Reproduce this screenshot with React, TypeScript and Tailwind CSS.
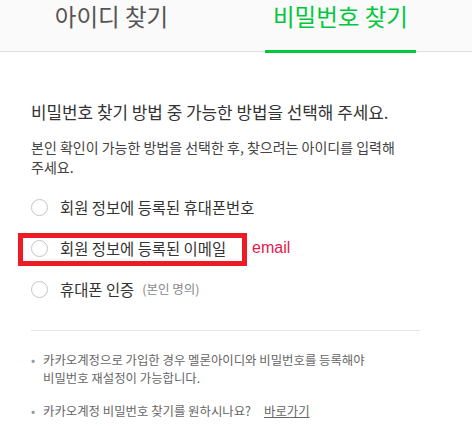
import React from "react";

const font = { fontFamily: '"Noto Sans CJK KR", "Noto Sans", sans-serif' };

function Radio({ label, note }: { label: string; note?: string }) {
  return (
    <div className="flex items-center h-[20px]">
      <span className="w-[17px] h-[17px] rounded-full border border-[#c4c4c4] bg-white shrink-0" />
      <span className="ml-[12px] text-[15.4px] leading-[20px] text-[#333] whitespace-nowrap">{label}</span>
      {note && <span className="ml-[8px] text-[12.5px] leading-[20px] text-[#888] whitespace-nowrap">{note}</span>}
    </div>
  );
}

export default function App() {
  return (
    <div className="w-[472px] h-[428px] bg-white overflow-hidden" style={font}>
      {/* tabs */}
      <div className="flex items-start h-[52px] bg-[#fafafa] border-b border-[#ddd]">
        <div className="w-[223px] flex justify-center pt-[1px]">
          <span className="text-[23.5px] leading-[30px] text-[#555]">아이디 찾기</span>
        </div>
        <div className="w-[235px] flex justify-center">
          <span className="h-[53px] px-2 pt-[1px] border-b-[3px] border-[#00c73c] text-[23.5px] leading-[30px] text-[#00c73c]">
            비밀번호 찾기
          </span>
        </div>
      </div>

      <div className="pl-[31px] pr-[40px]">
        <p className="mt-[49px] text-[16.9px] leading-[22px] text-[#333] whitespace-nowrap">
          비밀번호 찾기 방법 중 가능한 방법을 선택해 주세요.
        </p>
        <p className="mt-[14px] text-[14px] leading-[20px] text-[#444] whitespace-nowrap">
          본인 확인이 가능한 방법을 선택한 후, 찾으려는 아이디를 입력해
          <br />
          주세요.
        </p>

        <div className="mt-[20px] flex flex-col gap-[21px]">
          <Radio label="회원 정보에 등록된 휴대폰번호" />
          <div className="flex items-center h-[20px]">
            <div className="relative">
              <Radio label="회원 정보에 등록된 이메일" />
              <div className="absolute left-[-13px] top-[-5px] w-[229px] h-[33px] border-[5px] border-[#ed1c24]" />
            </div>
            <span
              className="ml-[26px] text-[16px] leading-[20px] text-[#e8174d]"
              style={{ fontFamily: '"Liberation Sans", Arial, sans-serif' }}
            >
              email
            </span>
          </div>
          <Radio label="휴대폰 인증" note="(본인 명의)" />
        </div>

        <div className="mt-[31px] w-[389px] border-t border-[#e6e6e6]" />

        <ul className="mt-[20px] text-[12.4px] leading-[18px] text-[#666] whitespace-nowrap">
          <li className="flex">
            <span className="w-[12px] shrink-0 text-[#999]">•</span>
            <span>
              카카오계정으로 가입한 경우 멜론아이디와 비밀번호를 등록해야
              <br />
              비밀번호 재설정이 가능합니다.
            </span>
          </li>
          <li className="flex mt-[15px]">
            <span className="w-[12px] shrink-0 text-[#999]">•</span>
            <span>
              카카오계정 비밀번호 찾기를 원하시나요?
              <a href="#" className="ml-[13px] underline text-[#666]">
                바로가기
              </a>
            </span>
          </li>
        </ul>
      </div>
    </div>
  );
}
